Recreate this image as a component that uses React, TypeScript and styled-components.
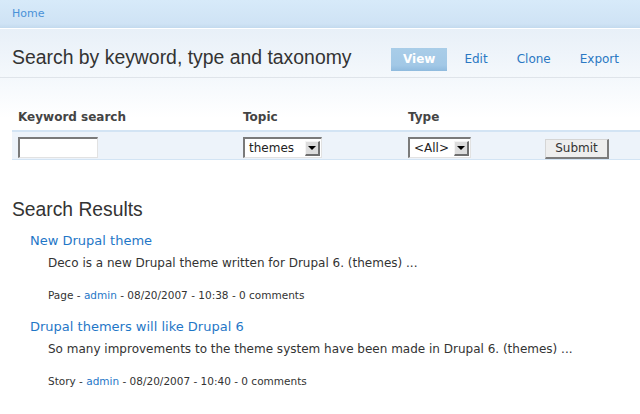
import React from 'react';
import styled, { createGlobalStyle } from 'styled-components';

type Result = {
  id: number;
  title: string;
  snippet: string;
  type: string;
  author: string;
  date: string;
  time: string;
  comments: number;
};

const results: Result[] = [
  {
    id: 0,
    title: 'New Drupal theme',
    snippet: 'Deco is a new Drupal theme written for Drupal 6. (themes) ...',
    type: 'Page',
    author: 'admin',
    date: '08/20/2007',
    time: '10:38',
    comments: 0,
  },
  {
    id: 1,
    title: 'Drupal themers will like Drupal 6',
    snippet:
      'So many improvements to the theme system have been made in Drupal 6. (themes) ...',
    type: 'Story',
    author: 'admin',
    date: '08/20/2007',
    time: '10:40',
    comments: 0,
  },
];

const tabs = ['View', 'Edit', 'Clone', 'Export'];

const GlobalStyle = createGlobalStyle`
  body {
    margin: 0;
    background: #fff;
    font-family: "DejaVu Sans", Verdana, sans-serif;
    color: #333;
  }
`;

const App = () => {
  return (
    <>
      <GlobalStyle />
      <S.TopBar>
        <S.HomeLink href="#">Home</S.HomeLink>
      </S.TopBar>
      <S.Header>
        <S.Title>Search by keyword, type and taxonomy</S.Title>
        <S.Tabs>
          {tabs.map((tab) => (
            <S.Tab key={tab} $active={tab === 'View'}>
              {tab}
            </S.Tab>
          ))}
        </S.Tabs>
      </S.Header>
      <S.FormArea>
        <S.Grid>
          <S.Label>Keyword search</S.Label>
          <S.Label>Topic</S.Label>
          <S.Label>Type</S.Label>
          <S.Label />
        </S.Grid>
        <S.Band>
          <div>
            <S.TextInput type="text" />
          </div>
          <div>
            <S.Select $width={79}>
              <span>themes</span>
              <S.Arrow />
            </S.Select>
          </div>
          <div>
            <S.Select $width={63}>
              <span>&lt;All&gt;</span>
              <S.Arrow />
            </S.Select>
          </div>
          <div>
            <S.SubmitButton>Submit</S.SubmitButton>
          </div>
        </S.Band>
      </S.FormArea>
      <S.Results>
        <S.ResultsHeading>Search Results</S.ResultsHeading>
        {results.map((item) => (
          <S.ResultItem key={item.id}>
            <S.ResultTitle href="#">{item.title}</S.ResultTitle>
            <S.Snippet>{item.snippet}</S.Snippet>
            <S.Meta>
              {item.type} - <a href="#">{item.author}</a> - {item.date} -{' '}
              {item.time} - {item.comments} comments
            </S.Meta>
          </S.ResultItem>
        ))}
      </S.Results>
    </>
  );
};

const S = {
  TopBar: styled.div`
    height: 28px;
    display: flex;
    align-items: center;
    padding: 0 12px;
    background: linear-gradient(#d7eaf9, #cfe3f5 85%, #c3daee);
    border-bottom: 1px solid #fff;
  `,
  HomeLink: styled.a`
    font-size: 11px;
    color: #4a92d8;
    text-decoration: none;
    margin-top: -2px;
  `,
  Header: styled.div`
    height: 49px;
    box-sizing: border-box;
    display: flex;
    align-items: center;
    padding: 19px 9px 7px 12px;
    background: linear-gradient(#e8f0f8, #f4f8fc);
    border-bottom: 1px solid #dfe4ea;
  `,
  Title: styled.h1`
    margin: 0;
    font-family: "Liberation Sans", Arial, sans-serif;
    font-weight: normal;
    font-size: 19.4px;
    color: #333;
    margin-top: -3px;
  `,
  Tabs: styled.div`
    margin-left: auto;
    display: flex;
    gap: 5px;
  `,
  Tab: styled.a<{ $active?: boolean }>`
    height: 23px;
    display: flex;
    align-items: center;
    padding: 0 12px;
    font-size: 12px;
    text-decoration: none;
    color: ${(p) => (p.$active ? '#fff' : '#2a78c3')};
    font-weight: ${(p) => (p.$active ? 'bold' : 'normal')};
    background: ${(p) =>
      p.$active ? 'linear-gradient(#a9cde8, #a2c8e6 75%, #8fbade)' : 'none'};
  `,
  FormArea: styled.div`
    padding: 29px 0 0 12px;
    background: linear-gradient(#f4f8fc, #fff 40px);
  `,
  Grid: styled.div`
    display: grid;
    grid-template-columns: 225px 165px 137px 1fr;
    padding-left: 6px;
    height: 20px;
    align-items: center;
    margin-bottom: 3px;
  `,
  Label: styled.div`
    font-size: 12px;
    font-weight: bold;
    color: #444;
  `,
  Band: styled.div`
    display: grid;
    grid-template-columns: 225px 165px 137px 1fr;
    padding: 5px 0 0 6px;
    height: 30px;
    box-sizing: border-box;
    background: #edf3fa;
    border-top: 2px solid #d3e4f4;
    border-bottom: 1px solid #d3e4f4;
  `,
  TextInput: styled.input`
    width: 80px;
    height: 21px;
    box-sizing: border-box;
    margin: 0;
    padding: 0 3px;
    border-style: solid;
    border-width: 2px 1px 1px 2px;
    border-color: #7a7a7a #e2e2e2 #e2e2e2 #7a7a7a;
    background: #fff;
  `,
  Select: styled.div<{ $width: number }>`
    width: ${(p) => p.$width}px;
    height: 21px;
    box-sizing: border-box;
    display: flex;
    align-items: center;
    justify-content: space-between;
    padding: 0 1px 0 4px;
    border-style: solid;
    border-width: 2px 1px 1px 2px;
    border-color: #7a7a7a #e2e2e2 #e2e2e2 #7a7a7a;
    background: #fff;
    font-size: 12px;
    color: #222;
  `,
  Arrow: styled.span`
    width: 15px;
    height: 15px;
    box-sizing: border-box;
    background: #dcdcdc;
    border-style: solid;
    border-width: 1px 2px 2px 1px;
    border-color: #f4f4f4 #6f6f6f #6f6f6f #f4f4f4;
    display: flex;
    align-items: center;
    justify-content: center;
    &::after {
      content: '';
      border-left: 4px solid transparent;
      border-right: 4px solid transparent;
      border-top: 4px solid #000;
    }
  `,
  SubmitButton: styled.button`
    width: 64px;
    height: 20px;
    margin-top: 1px;
    padding: 0;
    font-family: "DejaVu Sans", Verdana, sans-serif;
    font-size: 12px;
    color: #333;
    background: #eee;
    border-style: solid;
    border-width: 1px 2px 2px 1px;
    border-color: #d5d5d5 #7c7c7c #7c7c7c #d5d5d5;
  `,
  Results: styled.div`
    padding: 38px 12px 20px;
  `,
  ResultsHeading: styled.h2`
    margin: 0 0 10px;
    font-family: "Liberation Sans", Arial, sans-serif;
    font-weight: normal;
    font-size: 19.3px;
    line-height: 24px;
    color: #333;
  `,
  ResultItem: styled.div`
    padding-left: 18px;
    margin-bottom: 15px;
  `,
  ResultTitle: styled.a`
    display: block;
    font-size: 13px;
    line-height: 18px;
    color: #1f77c7;
    text-decoration: none;
  `,
  Snippet: styled.div`
    margin-top: 4px;
    padding-left: 18px;
    font-size: 12px;
    line-height: 18px;
    color: #333;
  `,
  Meta: styled.div`
    margin-top: 15px;
    padding-left: 18px;
    font-size: 10.5px;
    line-height: 16px;
    color: #333;
    a {
      color: #1f77c7;
      text-decoration: none;
    }
  `,
};

export default App;
